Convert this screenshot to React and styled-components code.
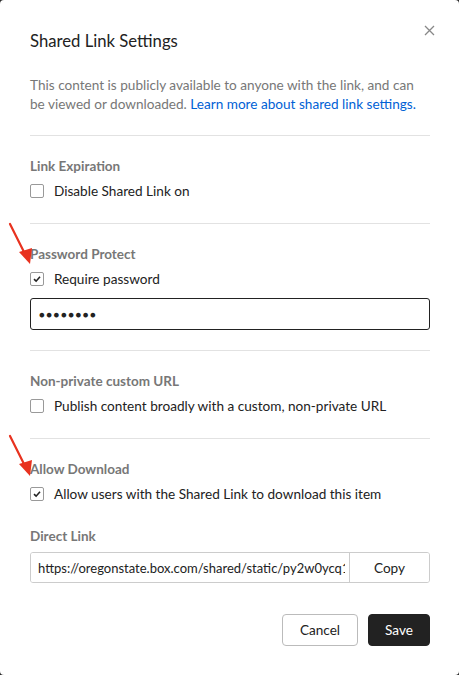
import React from "react";
import styled, { createGlobalStyle } from "styled-components";

const GlobalStyle = createGlobalStyle`
  html, body { margin: 0; padding: 0; background: #2b2b2b; }
  body { font-family: Lato, "Open Sans", sans-serif; }
  * { box-sizing: border-box; }
`;

function Arrow({ top }) {
  return (
    <ArrowMark style={{ top }} width="30" height="46" viewBox="0 0 30 46">
      <line x1="2" y1="2" x2="17" y2="32" stroke="#e8321f" strokeWidth="2.2" strokeLinecap="round" />
      <polygon points="11,30 24,26 22,42" fill="#e8321f" />
    </ArrowMark>
  );
}

function Checkbox({ checked }) {
  return (
    <Box>
      {checked && (
        <svg width="10" height="10" viewBox="0 0 10 10">
          <path d="M2 5.2 L4.1 7.2 L8 2.8" fill="none" stroke="#222" strokeWidth="1.6" />
        </svg>
      )}
    </Box>
  );
}

export default function App() {
  return (
    <>
      <GlobalStyle />
      <Dialog>
        <Close aria-label="close">
          <svg width="11" height="11" viewBox="0 0 11 11">
            <path d="M1 1 L10 10 M10 1 L1 10" stroke="#888" strokeWidth="1.3" />
          </svg>
        </Close>
        <Title>Shared Link Settings</Title>
        <Description>
          This content is publicly available to anyone with the link, and can be viewed or downloaded.{" "}
          <a href="#">Learn more about shared link settings.</a>
        </Description>

        <Section>
          <Label>Link Expiration</Label>
          <CheckRow>
            <Checkbox />
            Disable Shared Link on
          </CheckRow>
        </Section>

        <Section $bottom={20}>
          <Label>Password Protect</Label>
          <CheckRow>
            <Checkbox checked />
            Require password
          </CheckRow>
          <PasswordField>{"\u25CF".repeat(8)}</PasswordField>
        </Section>

        <Section>
          <Label>Non-private custom URL</Label>
          <CheckRow>
            <Checkbox />
            Publish content broadly with a custom, non-private URL
          </CheckRow>
        </Section>

        <Section $last>
          <Label>Allow Download</Label>
          <CheckRow>
            <Checkbox checked />
            Allow users with the Shared Link to download this item
          </CheckRow>
          <Label $gap={24}>Direct Link</Label>
          <LinkGroup>
            <LinkInput readOnly value="https://oregonstate.box.com/shared/static/py2w0ycq1hx8m3t6vd.pdf" />
            <CopyButton>Copy</CopyButton>
          </LinkGroup>
        </Section>

        <Footer>
          <Button>Cancel</Button>
          <Button $primary>Save</Button>
        </Footer>

        <Arrow top={222} />
        <Arrow top={434} />
      </Dialog>
    </>
  );
}

const Dialog = styled.div`
  position: relative;
  width: 459px;
  height: 675px;
  background: #fff;
  border-radius: 4px;
  padding: 30px 29px 30px 30px;
  display: flex;
  flex-direction: column;
  color: #222;
`;

const Close = styled.button`
  position: absolute;
  top: 25px;
  right: 24px;
  border: 0;
  background: none;
  padding: 0;
  width: 11px;
  height: 11px;
  display: flex;
`;

const Title = styled.h2`
  margin: 0;
  font-size: 16.7px;
  line-height: 22px;
  font-weight: 400;
  color: #222;
`;

const Description = styled.p`
  margin: 24px 0 0;
  font-size: 13.6px;
  line-height: 19px;
  color: #777;
  padding-bottom: 21px;
  border-bottom: 1px solid #e2e2e2;

  a {
    color: #0061d5;
    text-decoration: none;
  }
`;

const Section = styled.div`
  display: flex;
  flex-direction: column;
  padding: 21px 0 ${(p) => (p.$last ? 0 : p.$bottom ?? 23)}px;
  border-bottom: ${(p) => (p.$last ? "none" : "1px solid #e2e2e2")};
`;

const Label = styled.div`
  font-size: 13.5px;
  line-height: 18px;
  font-weight: 700;
  color: #777;
  margin-top: ${(p) => p.$gap ?? 0}px;
`;

const CheckRow = styled.label`
  display: flex;
  align-items: center;
  gap: 10px;
  margin-top: 7px;
  font-size: 13.6px;
  line-height: 18px;
  color: #222;
`;

const Box = styled.span`
  width: 14px;
  height: 14px;
  border: 1px solid #999;
  border-radius: 2px;
  display: flex;
  align-items: center;
  justify-content: center;
  background: #fff;
`;

const PasswordField = styled.div`
  margin-top: 10px;
  height: 32px;
  border: 1px solid #222;
  border-radius: 3px;
  display: flex;
  align-items: center;
  padding-left: 8px;
  font-size: 9.5px;
  letter-spacing: 1.6px;
  color: #222;
`;

const LinkGroup = styled.div`
  margin-top: 7px;
  height: 31px;
  border: 1px solid #ccc;
  border-radius: 3px;
  display: flex;
  overflow: hidden;
`;

const LinkInput = styled.input`
  flex: 1;
  min-width: 0;
  border: 0;
  outline: none;
  font-family: inherit;
  font-size: 13px;
  padding: 0 4px 0 7px;
  color: #222;
  background: #fff;
`;

const CopyButton = styled.button`
  width: 80px;
  flex: none;
  border: 0;
  border-left: 1px solid #ccc;
  background: #fff;
  font-family: inherit;
  font-size: 13.6px;
  color: #222;
`;

const Footer = styled.div`
  margin-top: 31px;
  display: flex;
  justify-content: flex-end;
  gap: 10px;
`;

const Button = styled.button`
  height: 32px;
  padding: 0 ${(p) => (p.$primary ? 16 : 17)}px;
  border-radius: 4px;
  border: 1px solid ${(p) => (p.$primary ? "#222" : "#bbb")};
  background: ${(p) => (p.$primary ? "#222" : "#fff")};
  color: ${(p) => (p.$primary ? "#fff" : "#222")};
  font-family: inherit;
  font-size: 13.6px;
`;

const ArrowMark = styled.svg`
  position: absolute;
  left: 8px;
`;
